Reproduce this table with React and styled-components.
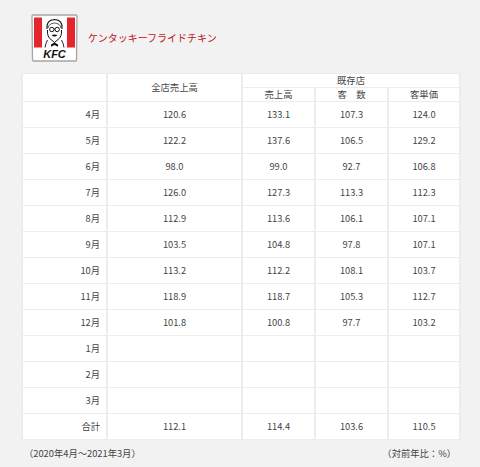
import React from "react";
import styled, { createGlobalStyle } from "styled-components";

const GlobalStyle = createGlobalStyle`
  html, body {
    margin: 0;
    padding: 0;
    background: #f2f2f2;
  }
  body {
    font-family: "Noto Sans CJK JP", "Noto Sans", sans-serif;
    color: #333;
  }
`;

const Page = styled.div`
  width: 480px;
  height: 467px;
  padding: 14px 21px 0 21px;
  box-sizing: border-box;
  overflow: hidden;
`;

const Brand = styled.div`
  display: flex;
  align-items: center;
  gap: 10px;
  padding-left: 10px;
  height: 48px;
`;

const BrandName = styled.div`
  color: #c0141f;
  font-size: 10px;
  margin-top: -2px;
`;

const Table = styled.table`
  margin-top: 11px;
  width: 438px;
  border-collapse: collapse;
  table-layout: fixed;
  background: #fff;
  font-size: 9.3px;
  color: #444;
`;

const Col = styled.col`
  width: ${(p) => p.$w}px;
`;

const Cell = styled.td`
  border: 1px solid #ececec;
  border-left-width: 2px;
  border-right-width: 2px;
  padding: 0 ${(p) => (p.$label ? "6px" : "0")} 0 0;
  height: 25px;
  line-height: 13px;
  text-align: ${(p) => (p.$label ? "right" : "center")};
  vertical-align: middle;
  white-space: nowrap;
`;

const HeadCell = styled.th`
  border: 1px solid #ececec;
  border-left-width: 2px;
  border-right-width: 2px;
  padding: 0;
  height: 13px;
  line-height: 13px;
  font-weight: normal;
  text-align: center;
  vertical-align: middle;
  white-space: nowrap;
`;

const Footer = styled.div`
  display: flex;
  justify-content: space-between;
  padding: 6px 3px 0 3px;
  font-size: 9.3px;
  color: #444;
`;

const Logo = () => (
  <svg width="47" height="48" viewBox="0 0 47 48">
    <path
      d="M2 1 H45 Q46 1 46 2 L45.5 46 Q45.5 47 44.5 47 H2.5 Q1.5 47 1.5 46 L1 2 Q1 1 2 1 Z"
      fill="#fff"
      stroke="#a5a5a5"
      strokeWidth="1.3"
    />
    <rect x="3" y="3.5" width="8" height="30" fill="#e4262c" />
    <rect x="36" y="3.5" width="8" height="30" fill="#e4262c" />
    {/* colonel */}
    <path d="M16 15 Q15 6 23.5 5.5 Q32 6 31 15" fill="none" stroke="#111" strokeWidth="1.1" />
    <path d="M17 14 Q17.5 9.5 23.5 9 Q29.5 9.5 30 14" fill="none" stroke="#111" strokeWidth="0.7" />
    <circle cx="20.8" cy="15.5" r="2.2" fill="none" stroke="#111" strokeWidth="1" />
    <circle cx="26.2" cy="15.5" r="2.2" fill="none" stroke="#111" strokeWidth="1" />
    <path d="M23 15.3 H24" stroke="#111" strokeWidth="0.9" />
    <path
      d="M16.5 16 Q16 23 20 25.5 L23.5 28.5 L27 25.5 Q31 23 30.5 16"
      fill="none"
      stroke="#111"
      strokeWidth="1"
    />
    <path d="M20.5 21 Q23.5 19.8 26.5 21 Q23.5 24 20.5 21 Z" fill="#111" />
    <path d="M23.5 28.5 L20 30.5 L20 32.8 L23.5 31 L27 32.8 L27 30.5 Z" fill="#111" />
    <path d="M16.5 26 Q14.5 29.5 14 33.5 M30.5 26 Q32.5 29.5 33 33.5" fill="none" stroke="#111" strokeWidth="0.9" />
    <text
      x="23.5"
      y="44"
      textAnchor="middle"
      fontFamily="Liberation Sans, sans-serif"
      fontWeight="bold"
      fontStyle="italic"
      fontSize="11"
      fill="#111"
    >
      KFC
    </text>
  </svg>
);

const widths = [85, 135, 73, 73, 72];

const rows = [
  ["4月", "120.6", "133.1", "107.3", "124.0"],
  ["5月", "122.2", "137.6", "106.5", "129.2"],
  ["6月", "98.0", "99.0", "92.7", "106.8"],
  ["7月", "126.0", "127.3", "113.3", "112.3"],
  ["8月", "112.9", "113.6", "106.1", "107.1"],
  ["9月", "103.5", "104.8", "97.8", "107.1"],
  ["10月", "113.2", "112.2", "108.1", "103.7"],
  ["11月", "118.9", "118.7", "105.3", "112.7"],
  ["12月", "101.8", "100.8", "97.7", "103.2"],
  ["1月", "", "", "", ""],
  ["2月", "", "", "", ""],
  ["3月", "", "", "", ""],
  ["合計", "112.1", "114.4", "103.6", "110.5"],
];

export default function App() {
  return (
    <Page>
      <GlobalStyle />
      <Brand>
        <Logo />
        <BrandName>ケンタッキーフライドチキン</BrandName>
      </Brand>
      <Table>
        <colgroup>
          {widths.map((w, i) => (
            <Col key={i} $w={w} />
          ))}
        </colgroup>
        <thead>
          <tr>
            <HeadCell rowSpan={2}></HeadCell>
            <HeadCell rowSpan={2}>全店売上高</HeadCell>
            <HeadCell colSpan={3}>既存店</HeadCell>
          </tr>
          <tr>
            <HeadCell>売上高</HeadCell>
            <HeadCell>客　数</HeadCell>
            <HeadCell>客単価</HeadCell>
          </tr>
        </thead>
        <tbody>
          {rows.map((r) => (
            <tr key={r[0]}>
              <Cell $label>{r[0]}</Cell>
              {r.slice(1).map((v, i) => (
                <Cell key={i}>{v}</Cell>
              ))}
            </tr>
          ))}
        </tbody>
      </Table>
      <Footer>
        <span>（2020年4月～2021年3月）</span>
        <span>（対前年比：%）</span>
      </Footer>
    </Page>
  );
}
